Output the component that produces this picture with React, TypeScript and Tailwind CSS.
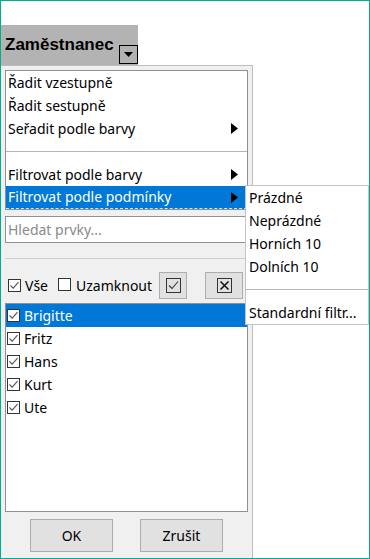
import React from 'react';

const font = { fontFamily: '"Noto Sans", "Liberation Sans", sans-serif' };

const Arrow = () => (
    <svg width="7" height="11" viewBox="0 0 7 11" className="shrink-0">
        <path d="M0 0 L7 5.5 L0 11 Z" fill="#000" />
    </svg>
);

const CheckBox = ({ checked = true }: { checked?: boolean }) => (
    <span className="inline-flex w-[13px] h-[13px] border border-[#333] bg-white items-center justify-center shrink-0">
        {checked && (
            <svg width="11" height="11" viewBox="0 0 11 11">
                <path d="M1.5 5.5 L4.2 8.2 L9.5 2.2" stroke="#555" strokeWidth="1.1" fill="none" />
            </svg>
        )}
    </span>
);

const MenuRow = ({ label, arrow, active }: { label: string; arrow?: boolean; active?: boolean }) => (
    <div
        className={`h-[23px] flex items-center justify-between pl-[2px] pr-[9px] ${active
            ? 'bg-[#0078d7] text-white border-b border-dashed border-white/80'
            : 'text-black'
            }`}
    >
        <span>{label}</span>
        {arrow && <Arrow />}
    </div>
);

const SubRow = ({ label }: { label: string }) => (
    <div className="h-[23px] flex items-center pl-[3px] text-black">{label}</div>
);

const names = ['Brigitte', 'Fritz', 'Hans', 'Kurt', 'Ute'];

export default function App() {
    return (
        <div
            className="relative w-[370px] h-[559px] border border-[#00ad8c] bg-white flex flex-col text-[14px] leading-none"
            style={font}
        >
            {/* Column header */}
            <div className="mt-[24px] w-[137px] h-[40px] bg-[#b3b3b3] flex items-end justify-between">
                <span
                    className="pl-[4px] pb-[12px] text-[17px] font-bold text-black"
                    style={{ fontFamily: '"Liberation Sans", Arial, sans-serif' }}
                >
                    Zaměstnanec
                </span>
                <span className="mb-[1px] w-[19px] h-[19px] border border-black flex items-center justify-center">
                    <svg width="9" height="5" viewBox="0 0 9 5">
                        <path d="M0 0 L9 0 L4.5 5 Z" fill="#000" />
                    </svg>
                </span>
            </div>

            {/* Autofilter popup */}
            <div className="w-[252px] flex-1 bg-[#f0f0f0] border-t border-r border-[#bdbdbd] pl-[4px] pt-[4px] flex flex-col">
                <div className="w-[243px] bg-white border border-[#8d9097] flex flex-col">
                    <MenuRow label="Řadit vzestupně" />
                    <MenuRow label="Řadit sestupně" />
                    <MenuRow label="Seřadit podle barvy" arrow />
                    <div className="h-[23px] flex items-center">
                        <div className="w-full h-px bg-[#b5b5b5]" />
                    </div>
                    <MenuRow label="Filtrovat podle barvy" arrow />
                    <MenuRow label="Filtrovat podle podmínky" arrow active />
                </div>

                <div className="mt-[6px] w-[243px] h-[27px] bg-white border border-[#8d9097] flex items-center pl-[2px] text-[#8a8a8a]">
                    Hledat prvky...
                </div>

                <div className="mt-[15px] w-[243px] h-px bg-[#cfcfcf]" />

                <div className="mt-[13px] w-[243px] h-[27px] flex items-center">
                    <span className="ml-[3px]"><CheckBox /></span>
                    <span className="ml-[4px]">Vše</span>
                    <span className="ml-[10px]"><CheckBox checked={false} /></span>
                    <span className="ml-[5px]">Uzamknout</span>
                    <span className="ml-auto w-[28px] h-[27px] bg-[#e1e1e1] border border-[#adadad] flex items-center justify-center">
                        <svg width="15" height="15" viewBox="0 0 15 15">
                            <rect x="0.5" y="0.5" width="14" height="14" fill="none" stroke="#333" />
                            <path d="M3 7.5 L6 10.5 L12 3.5" stroke="#333" strokeWidth="1.1" fill="none" />
                        </svg>
                    </span>
                    <span className="ml-[18px] mr-[5px] w-[38px] h-[27px] bg-[#e1e1e1] border border-[#adadad] flex items-center justify-center">
                        <svg width="15" height="15" viewBox="0 0 15 15">
                            <rect x="0.5" y="0.5" width="14" height="14" fill="none" stroke="#333" />
                            <path d="M3.5 3.5 L11.5 11.5 M11.5 3.5 L3.5 11.5" stroke="#111" strokeWidth="1.6" fill="none" />
                        </svg>
                    </span>
                </div>

                <div className="mt-[4px] w-[243px] h-[209px] bg-white border border-[#8d9097] flex flex-col">
                    {names.map((n, i) => (
                        <div
                            key={n}
                            className={`h-[23px] flex items-center pl-[1px] gap-[4px] ${i === 0 ? 'bg-[#0078d7] text-white' : 'text-black'}`}
                        >
                            <CheckBox />
                            <span>{n}</span>
                        </div>
                    ))}
                </div>

                <div className="mt-[7px] w-[243px] flex gap-[27px] pl-[25px]">
                    <button className="w-[83px] h-[33px] bg-[#e1e1e1] border border-[#adadad] text-black">OK</button>
                    <button className="w-[83px] h-[33px] bg-[#e1e1e1] border border-[#adadad] text-black">Zrušit</button>
                </div>
            </div>

            {/* Submenu: Filtrovat podle podmínky */}
            <div className="absolute left-[244px] top-[184px] w-[124px] bg-white border border-[#c4c4c4] flex flex-col">
                <SubRow label="Prázdné" />
                <SubRow label="Neprázdné" />
                <SubRow label="Horních 10" />
                <SubRow label="Dolních 10" />
                <div className="h-[23px] flex items-center">
                    <div className="w-full h-px bg-[#b5b5b5]" />
                </div>
                <SubRow label="Standardní filtr..." />
            </div>
        </div>
    );
}
